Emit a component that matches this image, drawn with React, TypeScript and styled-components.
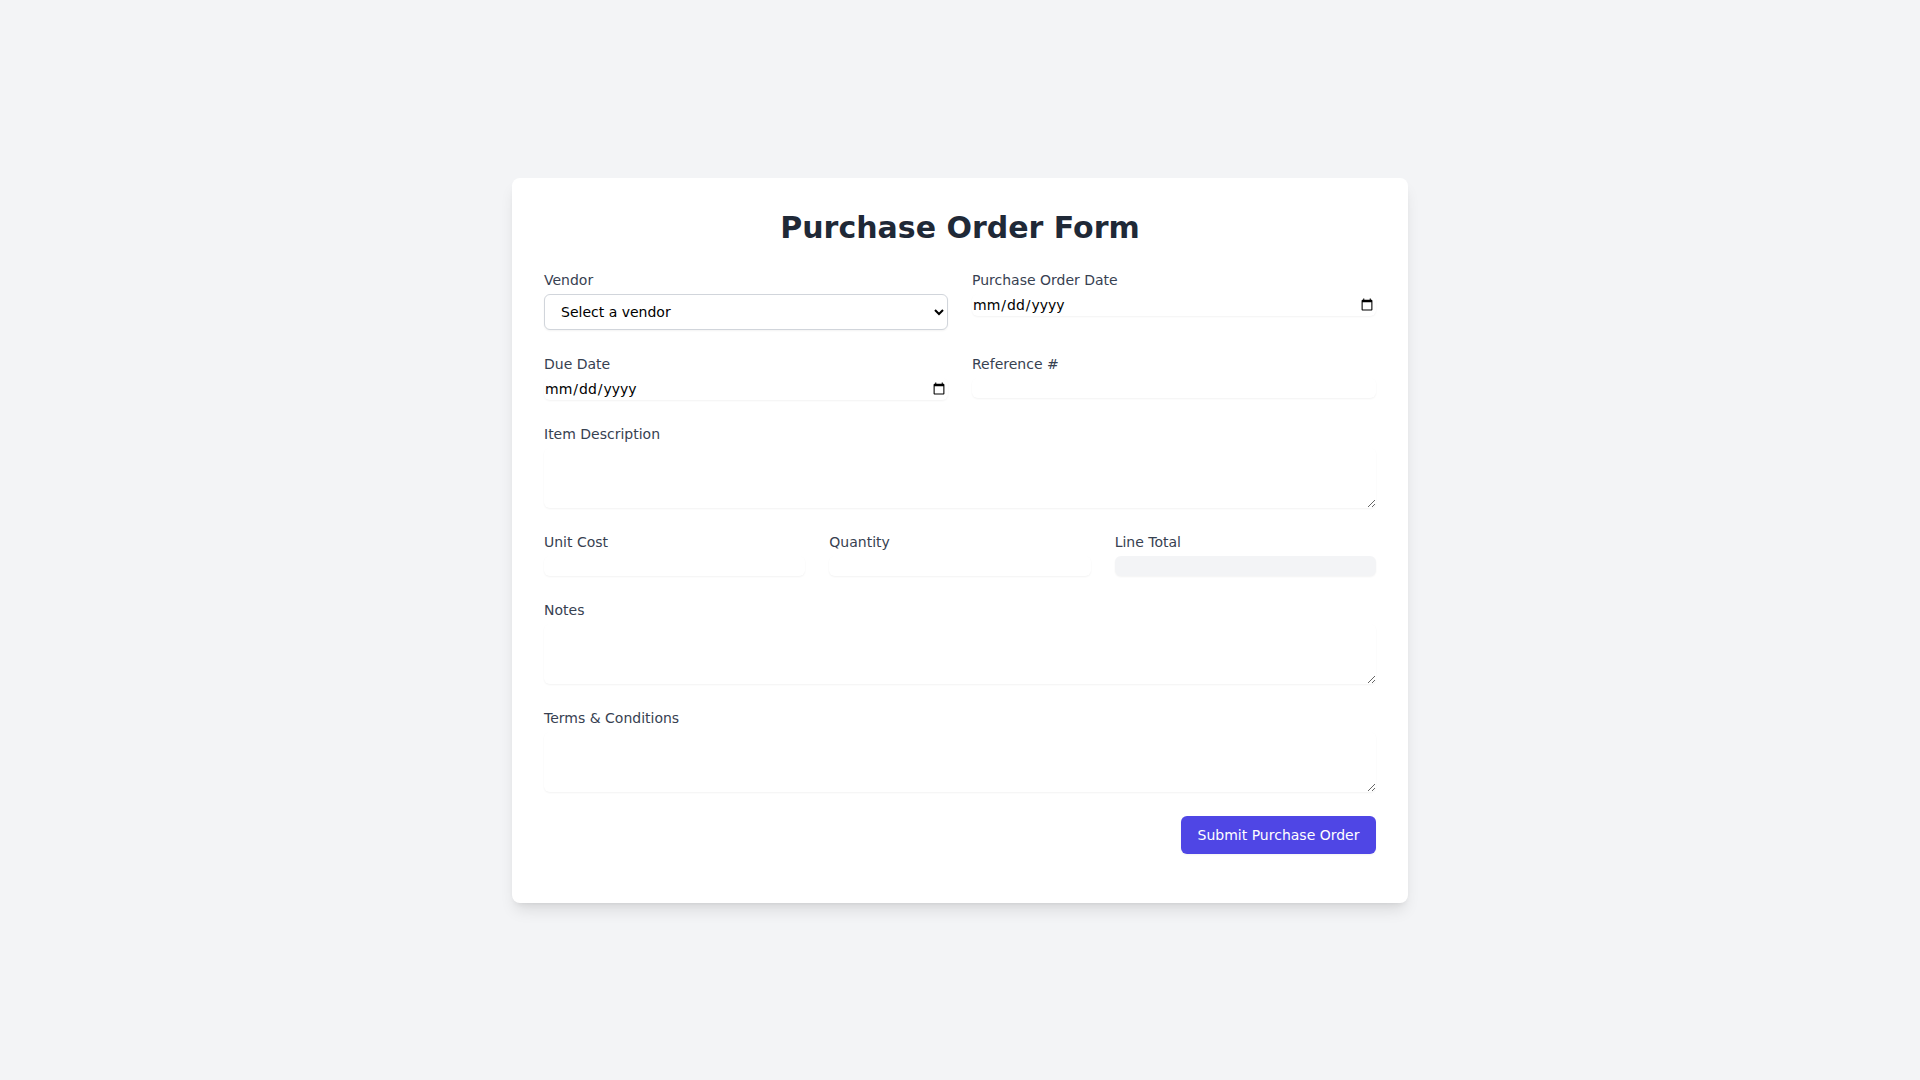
import React from "react";
import styled, { createGlobalStyle } from "styled-components";

const GlobalStyle = createGlobalStyle`
  *, *::before, *::after { box-sizing: border-box; }
  html, body { margin: 0; padding: 0; }
  body {
    background: #f3f4f6;
    font-family: "DejaVu Sans", sans-serif;
    line-height: 1.5;
  }
`;

const Page = styled.div`
  min-height: 100vh;
  display: flex;
  align-items: center;
  justify-content: center;
`;

const Card = styled.div`
  width: 896px;
  background: #ffffff;
  border-radius: 8px;
  padding: 32px 32px 49px;
  box-shadow: 0 10px 15px -3px rgba(0, 0, 0, 0.1), 0 4px 6px -4px rgba(0, 0, 0, 0.1);
`;

const Title = styled.h1`
  margin: 0 0 24px;
  text-align: center;
  font-size: 30px;
  line-height: 36px;
  font-weight: 700;
  color: #1f2937;
`;

const Form = styled.form`
  display: grid;
  grid-template-columns: 1fr;
  gap: 24px;
`;

const Row = styled.div<{ $cols: number }>`
  display: grid;
  grid-template-columns: repeat(${(p) => p.$cols}, minmax(0, 1fr));
  gap: 24px;
  align-items: start;
`;

const Field = styled.div`
  display: flex;
  flex-direction: column;
`;

const Label = styled.label`
  display: block;
  font-size: 14px;
  line-height: 20px;
  font-weight: 400;
  color: #374151;
  margin-bottom: 4px;
`;

const baseInput = `
  display: block;
  width: 100%;
  margin: 0;
  border: 0;
  padding: 0;
  border-radius: 6px;
  box-shadow: 0 1px 2px 0 rgba(0, 0, 0, 0.05);
  font-family: "DejaVu Sans", sans-serif;
  font-size: 14px;
  line-height: 20px;
  color: #000000;
  outline: none;
`;

const TextInput = styled.input<{ $readOnly?: boolean }>`
  ${baseInput}
  height: 20px;
  background: ${(p) => (p.$readOnly ? "#f3f4f6" : "#ffffff")};
`;

const DateInput = styled.input`
  ${baseInput}
  background: #ffffff;
`;

const Select = styled.select`
  display: block;
  width: 100%;
  height: 36px;
  margin: 0;
  padding: 0 12px;
  border: 1px solid #d1d5db;
  border-radius: 6px;
  background: #ffffff;
  box-shadow: 0 1px 2px 0 rgba(0, 0, 0, 0.05);
  font-family: "DejaVu Sans", sans-serif;
  font-size: 14px;
  color: #000000;
  outline: none;
`;

const TextArea = styled.textarea`
  ${baseInput}
  height: 60px;
  background: #ffffff;
  resize: vertical;
`;

const Actions = styled.div`
  display: flex;
  justify-content: flex-end;
`;

const SubmitButton = styled.button`
  border: 0;
  margin: 0;
  padding: 8px 16.5px;
  border-radius: 6px;
  background: #4f46e5;
  color: #ffffff;
  font-family: "DejaVu Sans", sans-serif;
  font-size: 14px;
  line-height: 22px;
  cursor: pointer;
  box-shadow: 0 1px 2px 0 rgba(0, 0, 0, 0.05);
`;

export default function App() {
  return (
    <>
      <GlobalStyle />
      <Page>
        <Card>
          <Title>Purchase Order Form</Title>
          <Form onSubmit={(e) => e.preventDefault()}>
            <Row $cols={2}>
              <Field>
                <Label htmlFor="vendor">Vendor</Label>
                <Select id="vendor" defaultValue="">
                  <option value="">Select a vendor</option>
                  <option value="acme">Acme Supplies</option>
                  <option value="globex">Globex Corporation</option>
                </Select>
              </Field>
              <Field>
                <Label htmlFor="poDate">Purchase Order Date</Label>
                <DateInput id="poDate" type="date" />
              </Field>
            </Row>
            <Row $cols={2}>
              <Field>
                <Label htmlFor="dueDate">Due Date</Label>
                <DateInput id="dueDate" type="date" />
              </Field>
              <Field>
                <Label htmlFor="ref">Reference #</Label>
                <TextInput id="ref" type="text" />
              </Field>
            </Row>
            <Field>
              <Label htmlFor="desc">Item Description</Label>
              <TextArea id="desc" rows={3} />
            </Field>
            <Row $cols={3}>
              <Field>
                <Label htmlFor="unitCost">Unit Cost</Label>
                <TextInput id="unitCost" type="number" />
              </Field>
              <Field>
                <Label htmlFor="qty">Quantity</Label>
                <TextInput id="qty" type="number" />
              </Field>
              <Field>
                <Label htmlFor="lineTotal">Line Total</Label>
                <TextInput id="lineTotal" type="text" readOnly $readOnly />
              </Field>
            </Row>
            <Field>
              <Label htmlFor="notes">Notes</Label>
              <TextArea id="notes" rows={3} />
            </Field>
            <Field>
              <Label htmlFor="terms">Terms &amp; Conditions</Label>
              <TextArea id="terms" rows={3} />
            </Field>
            <Actions>
              <SubmitButton type="submit">Submit Purchase Order</SubmitButton>
            </Actions>
          </Form>
        </Card>
      </Page>
    </>
  );
}
